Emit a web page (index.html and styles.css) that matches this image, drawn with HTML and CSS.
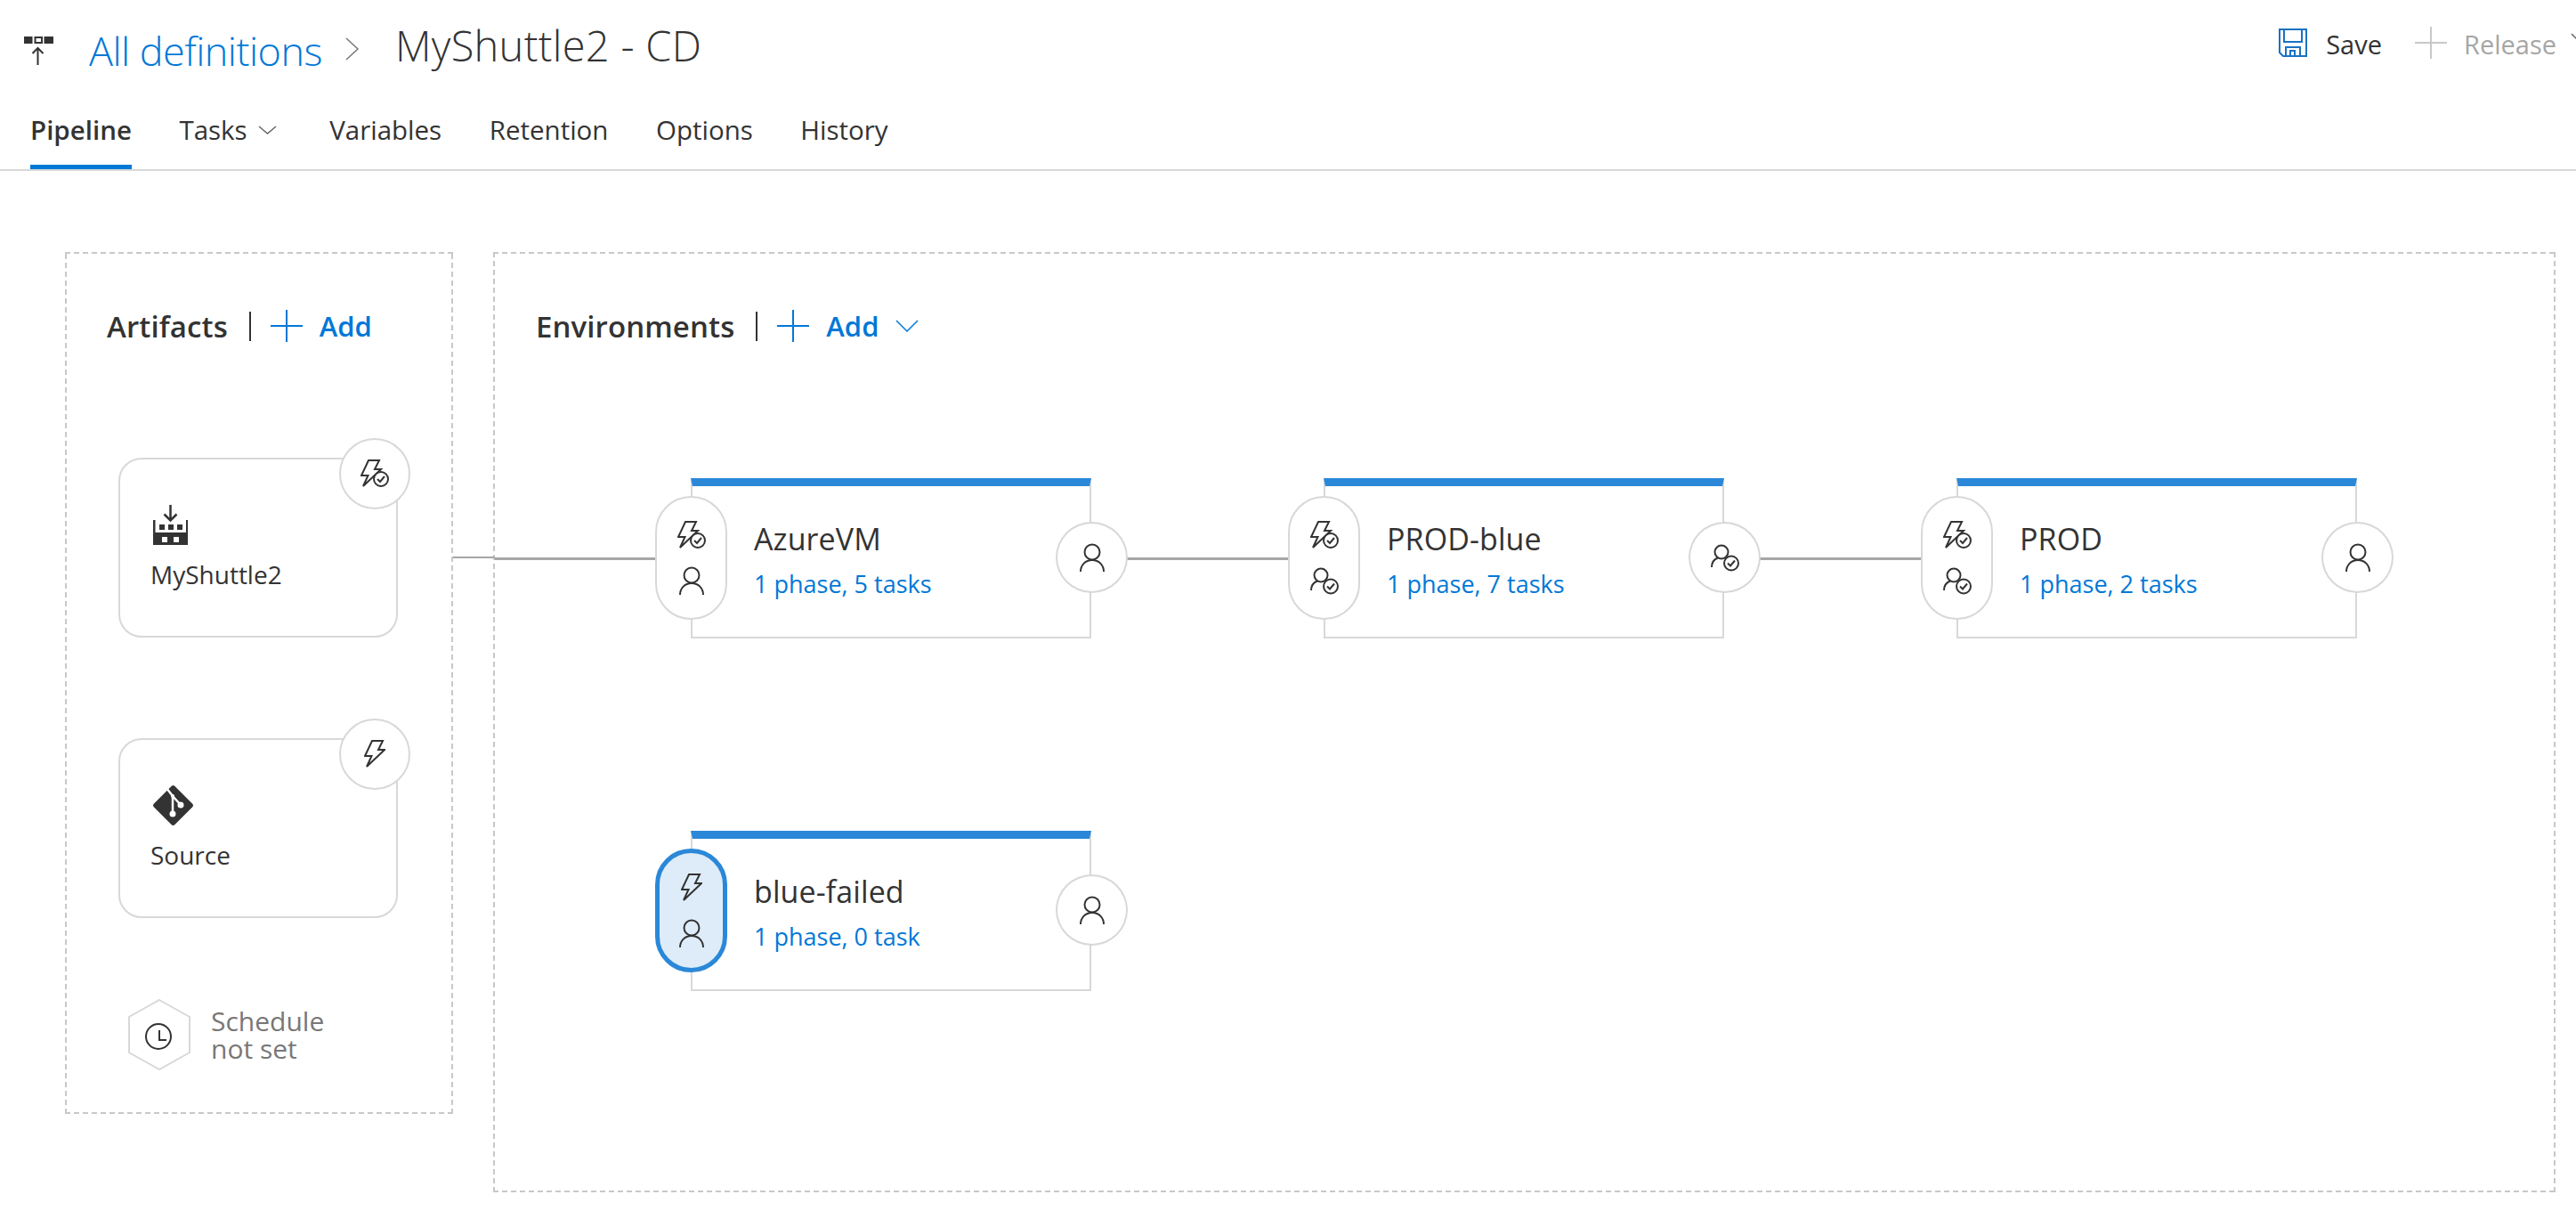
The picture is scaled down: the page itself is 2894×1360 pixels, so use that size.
FILE: index.html
```html
<!DOCTYPE html>
<html>

<head>
    <meta charset="utf-8">
    <title>MyShuttle2 - CD</title>
    <link rel="stylesheet" href="styles.css">
</head>

<body>
    <svg class="defs" width="0" height="0">
        <symbol id="bolt" viewBox="0 0 24 32">
            <path d="M9 1h12l-5 10h7L3 30l5.500-12H1z" fill="none" stroke="#333" stroke-width="2" />
        </symbol>
        <symbol id="bolt-check" viewBox="0 0 32 32">
            <path d="M9 1h12l-5 10h7L3 30l5.500-12H1z" fill="none" stroke="#333" stroke-width="2" />
            <circle cx="23" cy="22" r="8" fill="#fff" stroke="#333" stroke-width="2" />
            <path d="M19 22l3 3 5-6" fill="none" stroke="#333" stroke-width="2" />
        </symbol>
        <symbol id="person" viewBox="0 0 28 32">
            <circle cx="14" cy="10" r="8.500" fill="none" stroke="#333" stroke-width="2" />
            <path d="M1 32c0-7 5-13 13-13s13 6 13 13" fill="none" stroke="#333" stroke-width="2" />
        </symbol>
        <symbol id="person-check" viewBox="0 0 32 32">
            <circle cx="12" cy="10" r="7.500" fill="none" stroke="#333" stroke-width="2" />
            <path d="M1 27c0-5 3-9 7-10.500" fill="none" stroke="#333" stroke-width="2" />
            <circle cx="23" cy="22.500" r="8" fill="#fff" stroke="#333" stroke-width="2" />
            <path d="M19 22.500l3 3 5-6" fill="none" stroke="#333" stroke-width="2" />
        </symbol>
        <symbol id="plus" viewBox="0 0 36 36">
            <path d="M18 0v36M0 18h36" fill="none" stroke="currentColor" stroke-width="2" />
        </symbol>
    </svg>

    <div class="topbar">
        <svg class="logo" width="33" height="33" viewBox="0 0 33 33">
            <path d="M0 1h9.500v8H0zM22.500 1H33v8H22.500z" fill="#333" />
            <path d="M12.500 2H20v6h-7.500z" fill="none" stroke="#333" stroke-width="2" />
            <path d="M15.500 33V14M9.500 20l6-6 6 6" fill="none" stroke="#333" stroke-width="2" />
        </svg>
        <a class="crumb">All definitions</a>
        <svg class="crumb-sep" width="16" height="26" viewBox="0 0 16 26">
            <path d="M1 1l13 12L1 25" fill="none" stroke="#777" stroke-width="1.500" />
        </svg>
        <h1 class="title">MyShuttle2 - CD</h1>
        <div class="actions">
            <svg class="save-icon" width="32" height="32" viewBox="0 0 32 32">
                <path d="M1 1h30v30H5l-4-4z" fill="none" stroke="#1b72c4" stroke-width="2" />
                <path d="M6 1v14h20V1M8 31v-10h16v10M13 31v-6h5v6" fill="none" stroke="#1b72c4" stroke-width="2" />
            </svg>
            <span class="save-label">Save</span>
            <svg class="release-plus" width="36" height="36"><use href="#plus" /></svg>
            <span class="release-label">Release</span>
            <svg class="release-chevron" width="17" height="10" viewBox="0 0 17 10">
                <path d="M1 1l7.500 7.500L16 1" fill="none" stroke="#666" stroke-width="1.500" />
            </svg>
        </div>
    </div>

    <div class="tabs">
        <a class="tab active">Pipeline</a>
        <a class="tab tasks">Tasks
            <svg width="21" height="10" viewBox="0 0 21 10">
                <path d="M1 1l9.500 8L20 1" fill="none" stroke="#666" stroke-width="1.500" />
            </svg>
        </a>
        <a class="tab">Variables</a>
        <a class="tab">Retention</a>
        <a class="tab">Options</a>
        <a class="tab">History</a>
    </div>

    <div class="stage">
        <div class="panel artifacts">
            <div class="panel-head">
                <h2>Artifacts</h2>
                <span class="sep"></span>
                <svg class="add-plus" width="36" height="36"><use href="#plus" /></svg>
                <a class="add">Add</a>
            </div>

            <div class="art-card first">
                <svg width="39" height="45" viewBox="0 0 39 45">
                    <path d="M19.500 0v17M12.500 10.500l7 7 7-7" fill="none" stroke="#333" stroke-width="2.500" />
                    <path d="M0 17h2.500v14H0zM37 17h2.500v14H37zM7 22h6v6H7zM17 22h6v6h-6zM27 22h6v6h-6z" fill="#333" />
                    <path d="M0 31h39v14H0zM10 36v6h6v-6zM23 36v6h6v-6z" fill="#333" fill-rule="evenodd" />
                </svg>
                <span class="art-name">MyShuttle2</span>
                <div class="trigger"><svg width="32" height="32"><use href="#bolt-check" /></svg></div>
            </div>

            <div class="art-card">
                <svg width="45" height="45" viewBox="0 0 45 45">
                    <path d="M20.500 1L1 20.500q-2 2 0 4L20.500 44q2 2 4 0L44 24.500q2-2 0-4L24.500 1q-2-2-4 0z" fill="#333" />
                    <path d="M15 3l7 9v20M22 12l9 10" fill="none" stroke="#fff" stroke-width="2.500" />
                    <circle cx="22" cy="32" r="3.500" fill="#fff" />
                    <circle cx="31" cy="22" r="3.500" fill="#fff" />
                    <circle cx="22" cy="12" r="2" fill="#fff" />
                </svg>
                <span class="art-name">Source</span>
                <div class="trigger"><svg width="24" height="32"><use href="#bolt" /></svg></div>
            </div>

            <div class="schedule">
                <svg width="70" height="80" viewBox="0 0 70 80">
                    <path d="M35 1l34 19v40L35 79 1 60V20z" fill="#fff" stroke="#d8d8d8" stroke-width="2" />
                    <circle cx="34" cy="42" r="14" fill="none" stroke="#333" stroke-width="2" />
                    <path d="M35 35v11h8" fill="none" stroke="#333" stroke-width="2" />
                </svg>
                <p>Schedule<br>not set</p>
            </div>
        </div>

        <div class="panel environments">
            <div class="panel-head">
                <h2>Environments</h2>
                <span class="sep"></span>
                <svg class="add-plus" width="36" height="36"><use href="#plus" /></svg>
                <a class="add">Add</a>
                <svg class="add-chevron" width="26" height="14" viewBox="0 0 26 14">
                    <path d="M1 1l12 12L25 1" fill="none" stroke="#0078d7" stroke-width="1.500" />
                </svg>
            </div>

            <div class="env-row">
                <div class="link in"></div>
                <div class="env-card">
                    <div class="pill">
                        <svg width="32" height="32"><use href="#bolt-check" /></svg>
                        <svg width="28" height="32"><use href="#person" /></svg>
                    </div>
                    <div class="env-name">AzureVM</div>
                    <a class="env-tasks">1 phase, 5 tasks</a>
                    <div class="gate"><svg width="28" height="32"><use href="#person" /></svg></div>
                </div>
                <div class="link"></div>
                <div class="env-card">
                    <div class="pill">
                        <svg width="32" height="32"><use href="#bolt-check" /></svg>
                        <svg width="32" height="32"><use href="#person-check" /></svg>
                    </div>
                    <div class="env-name">PROD-blue</div>
                    <a class="env-tasks">1 phase, 7 tasks</a>
                    <div class="gate"><svg width="32" height="32"><use href="#person-check" /></svg></div>
                </div>
                <div class="link"></div>
                <div class="env-card">
                    <div class="pill">
                        <svg width="32" height="32"><use href="#bolt-check" /></svg>
                        <svg width="32" height="32"><use href="#person-check" /></svg>
                    </div>
                    <div class="env-name">PROD</div>
                    <a class="env-tasks">1 phase, 2 tasks</a>
                    <div class="gate"><svg width="28" height="32"><use href="#person" /></svg></div>
                </div>
            </div>

            <div class="env-row second">
                <div class="env-card">
                    <div class="pill selected">
                        <svg width="24" height="32"><use href="#bolt" /></svg>
                        <svg width="28" height="32"><use href="#person" /></svg>
                    </div>
                    <div class="env-name">blue-failed</div>
                    <a class="env-tasks">1 phase, 0 task</a>
                    <div class="gate"><svg width="28" height="32"><use href="#person" /></svg></div>
                </div>
            </div>
        </div>
    </div>
</body>

</html>
```

FILE: styles.css
```css
html {
    background-color: white;
}

body {
    margin: 0;
    width: 2894px;
    height: 1360px;
    overflow: hidden;
    font-family: "Open Sans", "Noto Sans", sans-serif;
    color: #333333;
}

.defs {
    position: absolute;
}

svg {
    display: block;
    flex: none;
}

/* top bar */
.topbar {
    display: flex;
    align-items: center;
    height: 96px;
    padding-left: 27px;
}

.logo {
    margin-top: 17px;
}

.crumb {
    margin-left: 40px;
    margin-top: 17px;
    font-size: 45px;
    font-weight: 300;
    line-height: 60px;
    letter-spacing: -0.55px;
    color: #0078d7;
}

.crumb-sep {
    margin-left: 26px;
    margin-top: 14px;
}

.title {
    margin: 6px 0 0 40px;
    font-size: 47px;
    font-weight: 300;
    line-height: 60px;
    letter-spacing: 0.3px;
}

.actions {
    display: flex;
    align-items: center;
    margin-left: auto;
    margin-right: -11px;
    font-size: 29px;
}

.save-label {
    margin-left: 21px;
    margin-top: 2px;
}

.release-plus {
    margin-left: 37px;
    color: #c8c8c8;
}

.release-label {
    margin-left: 19px;
    margin-right: 16px;
    margin-top: 2px;
    color: #a6a6a6;
}

.release-chevron {
    margin-top: -12px;
}

/* tabs */
.tabs {
    display: flex;
    gap: 53.500px;
    height: 94px;
    padding-left: 34px;
    border-bottom: 2px solid #d8d8d8;
}

.tab {
    box-sizing: border-box;
    display: flex;
    align-items: center;
    height: 94px;
    padding-top: 10px;
    font-size: 29.500px;
    border-bottom: 5px solid transparent;
}

.tab.active {
    font-weight: 600;
    border-bottom-color: #0078d7;
}

.tasks svg {
    margin-left: 12px;
}

.tasks {
    margin-right: 6px;
}

/* panels */
.stage {
    display: flex;
    align-items: flex-start;
    gap: 45px;
    padding: 91px 0 0 73px;
}

/* dashes drawn by hand, a dashed border comes out with the wrong rhythm */
.panel {
    box-sizing: border-box;
    padding: 2px;
    background:
        repeating-linear-gradient(90deg, #c8c8c8 0 6px, transparent 6px 10px) top left / 100% 2px no-repeat,
        repeating-linear-gradient(90deg, #c8c8c8 0 6px, transparent 6px 10px) bottom left / 100% 2px no-repeat,
        repeating-linear-gradient(0deg, #c8c8c8 0 6px, transparent 6px 10px) top left / 2px 100% no-repeat,
        repeating-linear-gradient(0deg, #c8c8c8 0 6px, transparent 6px 10px) top right / 2px 100% no-repeat;
}

.artifacts {
    width: 436px;
    height: 968px;
}

.environments {
    width: 2317px;
    height: 1056px;
}

.panel-head {
    display: flex;
    align-items: center;
    height: 60px;
    margin: 51px 0 0 45px;
}

.environments .panel-head {
    margin-left: 46px;
}

.panel-head h2 {
    margin: 0;
    font-size: 33px;
    font-weight: 600;
    letter-spacing: 0.1px;
}

.sep {
    width: 2px;
    height: 33px;
    margin-left: 24px;
    background: #333333;
}

.add-plus {
    margin-left: 22px;
    color: #0078d7;
}

.add {
    margin-left: 19px;
    font-size: 31px;
    font-weight: 600;
    color: #0078d7;
}

.add-chevron {
    margin-left: 19px;
}

/* artifact cards */
.art-card {
    position: relative;
    box-sizing: border-box;
    display: flex;
    flex-direction: column;
    width: 314px;
    height: 202px;
    margin: 113px 0 0 58px;
    padding: 51px 0 0 37px;
    border: 2px solid #d8d8d8;
    border-radius: 26px;
}

.art-card.first {
    margin-top: 118px;
}

.art-name {
    margin: 14px 0 0 -3px;
    font-size: 28px;
    line-height: 38px;
}

.trigger {
    position: absolute;
    top: -24px;
    right: -16px;
    box-sizing: border-box;
    display: flex;
    align-items: center;
    justify-content: center;
    width: 80px;
    height: 80px;
    border: 2px solid #d8d8d8;
    border-radius: 50%;
    background: white;
}

.schedule {
    display: flex;
    align-items: center;
    gap: 23px;
    margin: 91px 0 0 69px;
}

.schedule p {
    margin: 0;
    font-size: 30px;
    line-height: 31px;
    color: #797775;
}

/* environment cards */
.env-row {
    display: flex;
    margin-top: 141px;
    padding-left: 220px;
}

.env-row.second {
    margin-top: 216px;
}

.link {
    flex: none;
    align-self: center;
    width: 261px;
    height: 3px;
    background: #a6a6a6;
}

.link.in {
    position: relative;
    width: 220px;
    margin-left: -220px;
}

/* the stretch between the two panels sits a pixel higher */
.link.in::before {
    content: "";
    position: absolute;
    top: -1px;
    left: -47px;
    width: 47px;
    height: 2px;
    background: #a6a6a6;
}

.env-card {
    position: relative;
    flex: none;
    box-sizing: border-box;
    width: 450px;
    height: 180px;
    padding: 36px 0 0 69px;
    border: 2px solid #d8d8d8;
    border-top: 9px solid #2b88d8;
}

.env-name {
    font-size: 34px;
    line-height: 46px;
    letter-spacing: 0.1px;
}

.env-tasks {
    display: block;
    margin-top: 10px;
    font-size: 27px;
    line-height: 36px;
    color: #0078d7;
}

.pill {
    position: absolute;
    top: 11px;
    left: -42px;
    box-sizing: border-box;
    display: flex;
    flex-direction: column;
    align-items: center;
    justify-content: center;
    gap: 19px;
    width: 81px;
    height: 139px;
    border: 2px solid #d8d8d8;
    border-radius: 41px;
    background: white;
}

.pill.selected {
    border: 5px solid #2b88d8;
    background: #deecf9;
}

.gate {
    position: absolute;
    top: 40px;
    right: -43px;
    box-sizing: border-box;
    display: flex;
    align-items: center;
    justify-content: center;
    width: 81px;
    height: 80px;
    border: 2px solid #d8d8d8;
    border-radius: 50%;
    background: white;
}
```
